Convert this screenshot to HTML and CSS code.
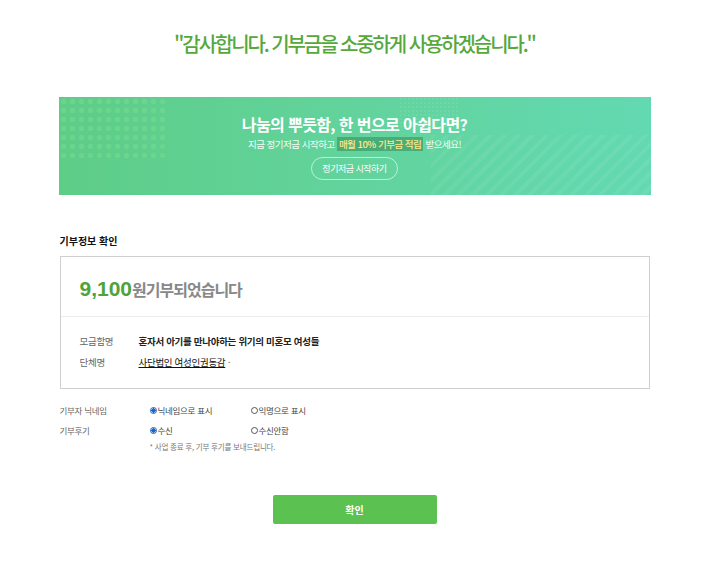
FILE: index.html
```html
<!DOCTYPE html>
<html lang="ko">
<head>
<meta charset="utf-8">
<link rel="stylesheet" href="styles.css">
</head>
<body>
<div class="page">
  <h1 class="thanks">"감사합니다. 기부금을 소중하게 사용하겠습니다."</h1>

  <div class="banner">
    <div class="dots"></div>
    <div class="dots2"></div>
    <div class="stripes"></div>
    <div class="banner-inner">
      <p class="banner-title">나눔의 뿌듯함, 한 번으로 아쉽다면?</p>
      <p class="banner-sub">지금 정기저금 시작하고 <span class="hl">매월 10% 기부금 적립</span> 받으세요!</p>
      <span class="banner-btn">정기저금 시작하기</span>
    </div>
  </div>

  <h2 class="section-title">기부정보 확인</h2>
  <div class="info-box">
    <div class="amount-row">
      <span class="amount">9,100</span><span class="amount-text">원기부되었습니다</span>
    </div>
    <div class="detail">
      <div class="detail-row"><span class="label">모금함명</span><span class="value strong">혼자서 아기를 만나야하는 위기의 미혼모 여성들</span></div>
      <div class="detail-row"><span class="label">단체명</span><span class="value"><span class="link">사단법인 여성인권동감</span> <span class="dot">·</span></span></div>
    </div>
  </div>

  <div class="options">
    <div class="opt-row">
      <span class="opt-label">기부자 닉네임</span>
      <span class="radio checked">닉네임으로 표시</span>
      <span class="radio">익명으로 표시</span>
    </div>
    <div class="opt-row">
      <span class="opt-label">기부후기</span>
      <span class="radio checked">수신</span>
      <span class="radio">수신안함</span>
    </div>
    <p class="note">* 사업 종료 후, 기부 후기를 보내드립니다.</p>
  </div>

  <div class="actions">
    <button class="confirm">확인</button>
  </div>
</div>
</body>
</html>
```

FILE: styles.css
```css
* { box-sizing: border-box; }
html, body { margin: 0; padding: 0; background: #fff; }
body {
  font-family: "Noto Sans CJK KR", "Noto Sans", sans-serif;
  color: #222;
}
.page {
  width: 592px;
  margin: 0 auto;
  padding-top: 27px;
}
.thanks {
  margin: 0;
  text-align: center;
  font-size: 20px;
  font-weight: 500;
  letter-spacing: -2.1px;
  color: #56a83c;
  line-height: 34px;
  height: 34px;
}
.banner {
  position: relative;
  margin-top: 36px;
  height: 98px;
  background: linear-gradient(90deg, #5ecd88 0%, #62d39c 50%, #63d9b2 100%);
  overflow: hidden;
}
.dots {
  position: absolute;
  left: 0; top: 0;
  width: 110px; height: 65px;
  background-image: radial-gradient(circle, rgba(120,220,140,0.5) 2.5px, transparent 3px);
  background-size: 9px 9px;
}
.dots2 {
  position: absolute;
  left: 340px; top: 0;
  width: 60px; height: 30px;
  background-image: radial-gradient(circle, rgba(255,255,255,0.08) 1px, transparent 1.5px);
  background-size: 4px 4px;
}
.stripes {
  position: absolute;
  right: 0; bottom: 0;
  width: 220px; height: 60px;
  background-image: repeating-linear-gradient(135deg, rgba(255,255,255,0.06) 0 4px, transparent 4px 10px);
}
.banner-inner {
  position: relative;
  display: flex;
  flex-direction: column;
  align-items: center;
  padding-top: 16px;
  color: #fff;
}
.banner-title {
  margin: 0;
  font-size: 16px;
  font-weight: 700;
  letter-spacing: -0.6px;
  line-height: 22px;
}
.banner-sub {
  margin: 2px 0 0;
  font-size: 9.5px;
  line-height: 14px;
  letter-spacing: -0.5px;
  color: #f2fff6;
}
.hl {
  background: rgba(50,140,90,0.55);
  color: #ffe98a;
  padding: 0 2px;
  font-weight: 500;
}
.banner-btn {
  margin-top: 6px;
  border: 1px solid rgba(255,255,255,0.6);
  border-radius: 12px;
  padding: 0 10px;
  height: 23px;
  line-height: 21px;
  font-size: 9px;
  letter-spacing: -0.5px;
}
.section-title {
  margin: 39px 0 0 1px;
  font-size: 10px;
  font-weight: 700;
  color: #111;
  line-height: 14px;
}
.info-box {
  margin: 8px 0 0 1px;
  width: 590px;
  border: 1px solid #cfcfcf;
}
.amount-row {
  height: 60px;
  border-bottom: 1px solid #ececec;
  display: flex;
  align-items: center;
  padding-left: 19px;
  padding-top: 4px;
}
.amount {
  font-family: "Liberation Sans", Arial, sans-serif;
  font-size: 21px;
  font-weight: 700;
  color: #4ea43a;
}
.amount-text {
  font-size: 16px;
  font-weight: 700;
  color: #888;
  letter-spacing: -1px;
}
.detail {
  padding: 13px 0 0 19px;
  height: 71px;
}
.detail-row {
  display: flex;
  height: 21px;
  align-items: center;
  font-size: 9.5px;
  letter-spacing: -0.3px;
}
.label {
  width: 59px;
  color: #666;
}
.value { color: #222; }
.strong { font-weight: 700; }
.link {
  text-decoration: underline;
  color: #111;
}
.dot { color: #444; }
.options {
  margin-top: 11px;
  padding-left: 1px;
}
.opt-row {
  display: flex;
  align-items: center;
  height: 20px;
  font-size: 8.5px;
  letter-spacing: -0.3px;
}
.opt-label {
  width: 90px;
  color: #666;
}
.radio {
  width: 101px;
  display: flex;
  align-items: center;
  color: #444;
}
.radio::before {
  content: "";
  width: 7px;
  height: 7px;
  border: 1px solid #555;
  border-radius: 50%;
  margin-right: 1px;
  box-sizing: border-box;
}
.radio.checked::before {
  border-color: #1a66c9;
  background: radial-gradient(circle, #1a66c9 0 2px, #fff 2.3px);
}
.note {
  margin: 1px 0 0 90px;
  font-size: 7.5px;
  color: #777;
  letter-spacing: -0.2px;
  line-height: 12px;
}
.actions {
  display: flex;
  justify-content: center;
  margin-top: 42px;
}
.confirm {
  width: 164px;
  height: 29px;
  border: none;
  border-radius: 2px;
  background: #5bc150;
  color: #fff;
  font-family: "Noto Sans CJK KR", sans-serif;
  font-size: 10px;
  font-weight: 700;
}
```
